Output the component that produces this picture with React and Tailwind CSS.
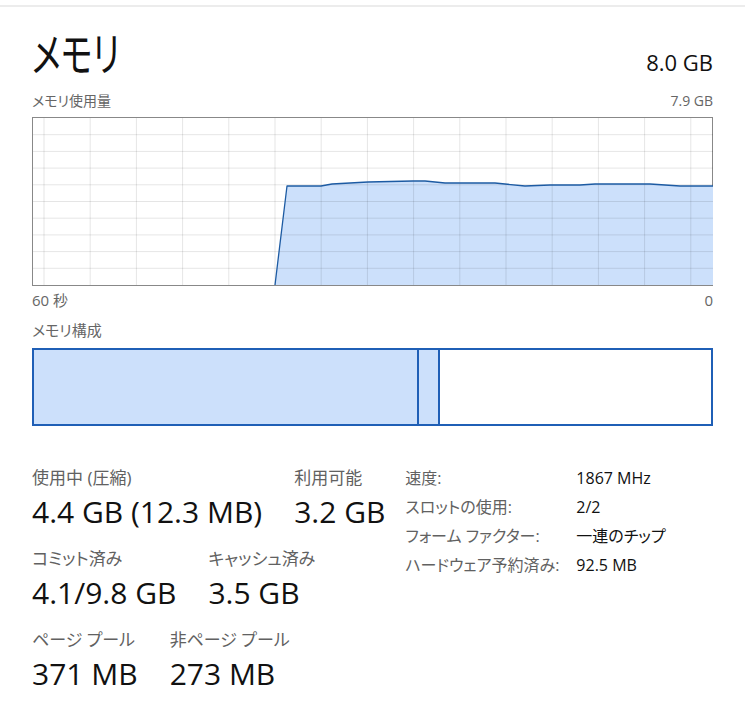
import React from "react";

const FONT = { fontFamily: '"Open Sans", "Noto Sans CJK JP", sans-serif' };

function Graph() {
  const W = 680;
  const H = 167;
  const vlines = [];
  for (let k = 0; k < 15; k++) vlines.push(11 + k * 46.2);
  const hlines = [];
  for (let k = 1; k < 10; k++) hlines.push(k * 16.7);
  const pts = [
    [242, 167],
    [254, 68],
    [288, 68],
    [299, 66],
    [335, 64],
    [380, 63],
    [392, 63],
    [412, 65],
    [462, 65],
    [492, 68],
    [517, 67],
    [547, 67],
    [562, 66],
    [617, 66],
    [647, 68],
    [680, 68],
  ];
  const line = pts.map((p) => p.join(",")).join(" ");
  const poly = line + ` ${W},${H} 242,${H}`;
  return (
    <svg width={W} height={H} viewBox={`0 0 ${W} ${H}`} className="block">
      <polygon points={poly} fill="#cce0fb" />
      {vlines.map((x) => (
        <line key={"v" + x} x1={x} y1={0} x2={x} y2={H} stroke="rgba(0,0,0,0.1)" strokeWidth="1" />
      ))}
      {hlines.map((y) => (
        <line key={"h" + y} x1={0} y1={y} x2={W} y2={y} stroke="rgba(0,0,0,0.1)" strokeWidth="1" />
      ))}
      <polyline points={line} fill="none" stroke="#1d5ba3" strokeWidth="1.3" strokeLinejoin="round" />
    </svg>
  );
}

function Stat({ label, value }) {
  return (
    <div className="flex flex-col">
      <div className="text-[17px] leading-[20px] text-[#616161] whitespace-nowrap">{label}</div>
      <div className="mt-[6px] text-[30px] leading-[36px] text-[#111] whitespace-nowrap">{value}</div>
    </div>
  );
}

export default function App() {
  const info = [
    ["速度:", "1867 MHz"],
    ["スロットの使用:", "2/2"],
    ["フォーム ファクター:", "一連のチップ"],
    ["ハードウェア予約済み:", "92.5 MB"],
  ];
  return (
    <div className="w-[745px] h-[719px] bg-white overflow-hidden [font-feature-settings:'palt']" style={FONT}>
      <div className="h-[5px]" />
      <div className="h-[2px] bg-[#ececec]" />
      <div className="px-8">
        <div className="mt-[22px] flex items-baseline justify-between">
          <span className="inline-block origin-left scale-x-[0.72] text-[46px] leading-[48px] font-normal text-[#111]">
            メモリ
          </span>
          <span className="text-[22px] leading-[28px] text-[#111]">8.0 GB</span>
        </div>
        <div className="mt-[14px] flex justify-between text-[14px] leading-[20px] text-[#666]">
          <span>メモリ使用量</span>
          <span>7.9 GB</span>
        </div>
        <div className="mt-[6px] h-[169px] border border-[#888] bg-white">
          <Graph />
        </div>
        <div className="mt-[4px] flex justify-between text-[15px] leading-[20px] text-[#666]">
          <span>60 秒</span>
          <span>0</span>
        </div>
        <div className="mt-[10px] text-[15px] leading-[20px] text-[#666]">メモリ構成</div>
        <div className="mt-[8px] h-[78px] border-2 border-[#1f5fb6] flex">
          <div className="w-[385px] border-r-2 border-[#1f5fb6] bg-[#cce0fb]" />
          <div className="w-[21px] border-r-2 border-[#1f5fb6] bg-[#cce0fb]" />
          <div className="flex-1 bg-white" />
        </div>
        <div className="mt-[42px] flex gap-5">
          <div className="flex flex-col gap-[19px]">
            <div className="flex gap-8">
              <Stat label="使用中 (圧縮)" value="4.4 GB (12.3 MB)" />
              <Stat label="利用可能" value="3.2 GB" />
            </div>
            <div className="flex gap-8">
              <Stat label="コミット済み" value="4.1/9.8 GB" />
              <Stat label="キャッシュ済み" value="3.5 GB" />
            </div>
            <div className="flex gap-8">
              <Stat label="ページ プール" value="371 MB" />
              <Stat label="非ページ プール" value="273 MB" />
            </div>
          </div>
          <div className="-mt-[4px] grid grid-cols-[171px_auto] text-[16px] leading-[29px] self-start">
            {info.map(([k, v]) => (
              <React.Fragment key={k}>
                <div className="text-[#616161] whitespace-nowrap">{k}</div>
                <div className="text-[#111] whitespace-nowrap">{v}</div>
              </React.Fragment>
            ))}
          </div>
        </div>
      </div>
    </div>
  );
}
